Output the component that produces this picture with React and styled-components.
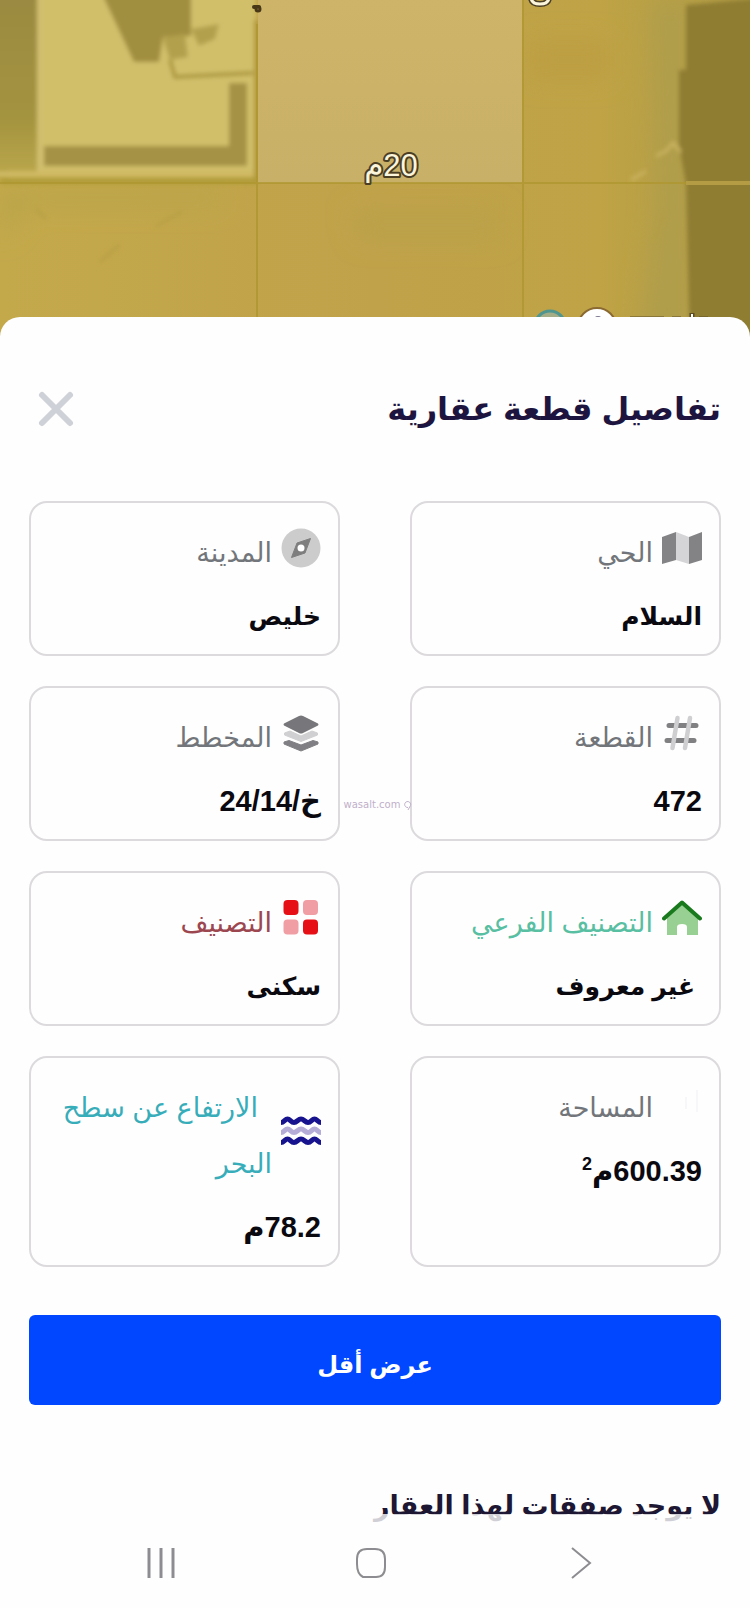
import React from "react";
import styled, { createGlobalStyle } from "styled-components";

const GlobalStyle = createGlobalStyle`
  *, *::before, *::after { box-sizing: border-box; }
  body {
    margin: 0;
    background: #fefefe;
    font-family: "Liberation Sans", "DejaVu Sans", sans-serif;
    color: #0b0910;
  }
`;

const Page = styled.div`
  display: flex;
  flex-direction: column;
  min-height: 100vh;
`;

const MapView = styled.svg`
  display: block;
  width: 100%;
  height: 340px;
`;

const Sheet = styled.main`
  position: relative;
  flex: 1;
  margin-top: -23px;
  padding: 56px 29px 0;
  background: #fefefe;
  border-radius: 20px 20px 0 0;
`;

const SheetHeader = styled.header`
  display: flex;
  align-items: center;
  justify-content: space-between;
  height: 72px;
`;

const Title = styled.h1`
  margin: 0;
  font-size: 32px;
  line-height: 72px;
  font-weight: 700;
  color: #1d1540;
`;

const CloseButton = styled.button`
  display: flex;
  padding: 8px;
  border: 0;
  background: none;
  cursor: pointer;
`;

const Cards = styled.dl`
  display: grid;
  grid-template-columns: 1fr 1fr;
  gap: 30px 70px;
  margin: 56px 0 0;
`;

const Card = styled.div`
  display: flex;
  flex-direction: column;
  gap: 8px;
  min-width: 0;
  padding: 22px 17px 11px;
  border: 2px solid #dcdadd;
  border-radius: 18px;
`;

const CardLabel = styled.dt`
  display: flex;
  align-items: center;
  gap: 9px;
  font-size: 27px;
  line-height: 56px;
  color: ${(p) => p.$color};
`;

const LabelText = styled.span`
  text-indent: ${(p) => (p.$indented ? "14px" : "0")};
`;

const CardIcon = styled.svg`
  flex: none;
  width: 40px;
  height: 40px;
  margin-bottom: 10px;
`;

const CardValue = styled.dd`
  margin: 0;
  font-size: ${(p) => (p.$numeric ? "29px" : "25px")};
  line-height: 54px;
  font-weight: 700;
  white-space: nowrap;

  sup {
    font-size: 18px;
    line-height: 0;
  }
`;

const LessButton = styled.button`
  display: block;
  width: 100%;
  height: 90px;
  margin-top: 48px;
  padding: 10px 0 0;
  border: 0;
  border-radius: 6px;
  background: #0047ff;
  color: #fff;
  font: inherit;
  font-size: 24px;
  font-weight: 700;
  cursor: pointer;
`;

const DealsTitle = styled.h2`
  margin: 73px 0 0;
  font-size: 27px;
  line-height: 56px;
  font-weight: 700;
  color: #1d1733;
`;

const Watermark = styled.div`
  position: absolute;
  top: 477px;
  left: 6px;
  right: 0;
  display: flex;
  align-items: center;
  justify-content: center;
  gap: 4px;
  font-family: "DejaVu Sans", sans-serif;
  font-size: 10px;
  line-height: 22px;
  color: #bfb0cb;
`;

const SystemBar = styled.nav`
  position: sticky;
  bottom: 0;
  display: flex;
  align-items: center;
  justify-content: space-around;
  height: 94px;
  margin-top: -22px;
  padding: 4px 64px 0 56px;
  background: rgba(254, 254, 254, 0.8);
`;

const SystemButton = styled.button`
  display: flex;
  padding: 4px;
  border: 0;
  background: none;
  cursor: pointer;
`;

const MapIcon = () => (
  <CardIcon viewBox="0 0 40 40" aria-hidden="true">
    <path d="M0 9 14 4V32L0 36Z" fill="#838385" />
    <path d="M14 4 27 9V36L14 32Z" fill="#d5d4d6" />
    <path d="M27 9 40 4V32L27 36Z" fill="#838385" />
  </CardIcon>
);

const CompassIcon = () => (
  <CardIcon viewBox="0 0 40 40" aria-hidden="true">
    <circle cx="20" cy="20" r="19.5" fill="#cdcccd" />
    <path d="M29.5 10.5 24 25 10.5 29.5 16 15Z" fill="#7e7e7e" stroke="#7e7e7e" strokeLinejoin="round" />
    <circle cx="20" cy="20" r="3.5" fill="#fff" />
  </CardIcon>
);

const HashIcon = () => (
  <CardIcon viewBox="0 0 40 40" aria-hidden="true">
    <path d="M7 12.500H34M5 27.500H32" stroke="#808082" strokeWidth="5" strokeLinecap="round" />
    <path d="M15.500 5 10.500 35M28 5 23 35" stroke="#cfcfd1" strokeWidth="4.500" strokeLinecap="round" />
  </CardIcon>
);

const LayersIcon = () => (
  <CardIcon viewBox="0 0 40 40" aria-hidden="true">
    <path d="M3.5 20 9 18 20 23 31 18 36.5 20V22L20 28.5 3.5 22Z" fill="#d0d0d3" stroke="#d0d0d3" strokeLinejoin="round" />
    <path d="M3 29 8 27.5 20 32 32 27.5 37 29V31L20 38 3 31Z" fill="#808084" stroke="#808084" strokeLinejoin="round" />
    <path d="M18 3Q20 2 22 3L37 10.5Q38 11.5 37 12.500L22 20Q20 21 18 20L3 12.500Q2 11.500 3 10.500Z" fill="#77777b" />
  </CardIcon>
);

const HomeIcon = () => (
  <CardIcon viewBox="0 0 40 40" aria-hidden="true">
    <path d="M20 6 36 20V37H25V29Q25 26 20 26T15 29V37H5V20Z" fill="#98cf92" />
    <path d="M2 20.5 20 4.5 38 20.5" fill="none" stroke="#187a1c" strokeWidth="4" strokeLinecap="round" strokeLinejoin="round" />
  </CardIcon>
);

const CategoryIcon = () => (
  <CardIcon viewBox="0 0 40 40" aria-hidden="true">
    <rect x="2.5" y="2" width="15" height="15" rx="4" fill="#e50f15" />
    <rect x="22" y="2" width="15" height="15" rx="4" fill="#f09ea3" />
    <rect x="2.5" y="21.5" width="15" height="15" rx="4" fill="#f09ea3" />
    <rect x="22" y="21.5" width="15" height="15" rx="4" fill="#e50f15" />
  </CardIcon>
);

const AreaIcon = () => (
  <CardIcon viewBox="0 0 40 40" aria-hidden="true">
    <path d="M35 7V29M24 14V26" stroke="#f7f6f8" strokeWidth="2" />
  </CardIcon>
);

const wave = "C3 3.5 4 0 6.500 0S10 3.5 13 3.5 17 0 20 0 24 3.5 27 3.5 31 0 33.500 0 37 3.5 40 3.5";

const WaveIcon = () => (
  <CardIcon viewBox="0 0 40 40" aria-hidden="true" fill="none" strokeWidth="5">
    <path d={`M0 3.5${wave}`} transform="translate(0 8)" stroke="#17138f" />
    <path d={`M0 3.5${wave}`} transform="translate(0 18)" stroke="#b5acd8" />
    <path d={`M0 3.5${wave}`} transform="translate(0 28)" stroke="#17138f" />
  </CardIcon>
);

const details = [
  { label: "الحي", value: "السلام", Icon: MapIcon },
  { label: "المدينة", value: "خليص", Icon: CompassIcon },
  { label: "القطعة", value: "472", numeric: true, Icon: HashIcon },
  { label: "المخطط", value: "خ/24/14", numeric: true, Icon: LayersIcon },
  { label: "التصنيف الفرعي", value: "\u00a0غير معروف", Icon: HomeIcon, color: "#58bfa2" },
  { label: "التصنيف", value: "سكنى", Icon: CategoryIcon, color: "#9c4650" },
  { label: "المساحة", value: <>600.39م<sup>2</sup></>, numeric: true, Icon: AreaIcon },
  { label: "الارتفاع عن سطح البحر", value: "78.2م", numeric: true, Icon: WaveIcon, color: "#38adba", indented: true },
];

function SatelliteMap() {
  return (
    <MapView viewBox="0 0 750 340" preserveAspectRatio="xMidYMin slice" role="img" aria-label="خريطة القطعة">
      <defs>
        <filter id="soft" x="-10%" y="-10%" width="120%" height="120%">
          <feGaussianBlur stdDeviation="2" />
        </filter>
        <filter id="haze" x="-50%" y="-50%" width="200%" height="200%">
          <feGaussianBlur stdDeviation="12" />
        </filter>
        <linearGradient id="ground" x1="0" y1="0" x2="1" y2="0">
          <stop offset="0" stopColor="#c4a94b" />
          <stop offset="0.5" stopColor="#c0a24a" />
          <stop offset="0.8" stopColor="#bfa345" />
          <stop offset="1" stopColor="#b09b45" />
        </linearGradient>
        <linearGradient id="roadside" x1="0" y1="0" x2="0" y2="1">
          <stop offset="0" stopColor="#9a8a42" />
          <stop offset="0.7" stopColor="#a4943f" />
          <stop offset="1" stopColor="#b9a64b" />
        </linearGradient>
        <linearGradient id="plot" x1="0" y1="0" x2="0" y2="1">
          <stop offset="0" stopColor="#cdb468" />
          <stop offset="1" stopColor="#c9b068" />
        </linearGradient>
      </defs>
      <rect width="750" height="340" fill="url(#ground)" />
      <g filter="url(#haze)">
        <path d="M0 190H220V205H30L0 240Z" fill="#b9a449" />
        <path d="M350 210H500V240H360Z" fill="#bba148" />
        <path d="M650 0H690V340H640L655 210Z" fill="#b09e4b" />
        <path d="M530 40H610V80H530Z" fill="#bd9f42" />
      </g>
      <g filter="url(#soft)">
        <rect x="-6" y="-6" width="262" height="182" fill="#d2bf6a" />
        <path d="M-6-6H37V172H-6Z" fill="url(#roadside)" />
        <path d="M40-6V171" stroke="#d2bf70" strokeWidth="5" />
        <path d="M102-6H191V36L163 37 159 62H134Z" fill="#a18f41" />
        <path d="M163 38 185 34 188 57 170 60ZM191 29 219 24 215 39 199 46Z" fill="#b3a04e" />
        <path d="M170 60 175 77 253 73" fill="none" stroke="#ac983f" strokeWidth="4" />
        <path d="M44 146H229V83H247V166H44Z" fill="#a69245" />
        <path d="M8 174H257" stroke="#d0ba63" strokeWidth="6" />
        <path d="M0 181H257" stroke="#b09c39" strokeWidth="6" />
        <path d="M256 20V183" stroke="#ae9637" strokeWidth="4" />
        <path d="M686 5 760-2V350H690L686 184 679 145V70H686Z" fill="#8f7d30" />
        <path d="M656 156 666 151 673 143 681 152M631 180 646 171" fill="none" stroke="#ccb563" strokeWidth="3" />
        <path d="M654 240 665 213M100 262 119 245M155 227 183 211M36 209 46 219" stroke="#b39c43" strokeWidth="2" />
      </g>
      <rect x="258" y="-2" width="264" height="185" fill="url(#plot)" />
      <g stroke="#ad952f" strokeWidth="2" fill="none">
        <path d="M257 24V340M523 0V340M0 183H686" opacity="0.75" />
        <path d="M686 183H750" stroke="#b39c43" strokeWidth="4" />
      </g>
      <text
        x="391"
        y="176"
        direction="rtl"
        textAnchor="middle"
        fontSize="31"
        fill="#fbf5dc"
        stroke="#4a3e25"
        strokeWidth="4"
        strokeLinejoin="round"
        paintOrder="stroke"
      >
        20م
      </text>
      <g fill="none" strokeLinecap="round">
        <path d="M531-3Q531 4 540 4T549-3" stroke="#4a3e25" strokeWidth="6" />
        <path d="M531-3Q531 4 540 4T549-3" stroke="#fbf5dc" strokeWidth="3" />
        <path d="M254 7H259" stroke="#493817" strokeWidth="4" />
        <circle cx="258" cy="9" r="2" stroke="#493817" strokeWidth="3" fill="#b5a468" />
      </g>
      <circle cx="550" cy="326" r="15" fill="#a5ad86" stroke="#4f9590" strokeWidth="3" />
      <circle cx="597" cy="327" r="19" fill="#fff" stroke="#8b6a32" strokeWidth="2" />
      <circle cx="598" cy="321" r="5" fill="#7d7792" />
      <path d="M630 318H664M672 318H681M699 318H708" stroke="#635328" strokeWidth="3" />
      <path d="M692 313V320" stroke="#5b4b22" strokeWidth="5" />
      <path d="M692 314V320" stroke="#fff" strokeWidth="2" />
    </MapView>
  );
}

export default function App() {
  return (
    <Page dir="rtl" lang="ar">
      <GlobalStyle />
      <SatelliteMap />
      <Sheet>
        <SheetHeader>
          <Title>تفاصيل قطعة عقارية</Title>
          <CloseButton type="button" aria-label="إغلاق">
            <svg width="38" height="38" viewBox="0 0 38 38" fill="none" stroke="#ced1d7" strokeWidth="6" strokeLinecap="round">
              <path d="M5 5 33 33M33 5 5 33" />
            </svg>
          </CloseButton>
        </SheetHeader>
        <Cards>
          {details.map(({ label, value, Icon, numeric, indented, color = "#72767b" }) => (
            <Card key={label}>
              <CardLabel $color={color}>
                <Icon />
                <LabelText $indented={indented}>{label}</LabelText>
              </CardLabel>
              <CardValue $numeric={numeric}>{value}</CardValue>
            </Card>
          ))}
        </Cards>
        <Watermark dir="ltr">
          <span>wasalt.com</span>
          <svg width="8" height="11" viewBox="0 0 8 11" fill="none" stroke="#bfb0cb" aria-hidden="true">
            <path d="M4 7.5A3 3 0 1 1 6.5 5.500L4 10" />
          </svg>
        </Watermark>
        <LessButton type="button">عرض أقل</LessButton>
        <DealsTitle>لا يوجد صفقات لهذا العقار</DealsTitle>
      </Sheet>
      <SystemBar dir="ltr">
        <SystemButton type="button" aria-label="التطبيقات الأخيرة">
          <svg width="32" height="32" viewBox="0 0 32 32" fill="none" stroke="#8d8d91" strokeWidth="3">
            <path d="M4 1V31M16 1V31M28 1V31" />
          </svg>
        </SystemButton>
        <SystemButton type="button" aria-label="الرئيسية">
          <svg width="32" height="32" viewBox="0 0 32 32" fill="none" stroke="#8d8d91" strokeWidth="2">
            <path d="M12 2H20Q30 2 30 12V20Q30 30 21 30H8Q2 27 2 17V12Q2 2 12 2Z" />
          </svg>
        </SystemButton>
        <SystemButton type="button" aria-label="رجوع">
          <svg width="32" height="32" viewBox="0 0 32 32" fill="none" stroke="#8d8d91" strokeWidth="2">
            <path d="M7 1 25 16 7 31" />
          </svg>
        </SystemButton>
      </SystemBar>
    </Page>
  );
}
